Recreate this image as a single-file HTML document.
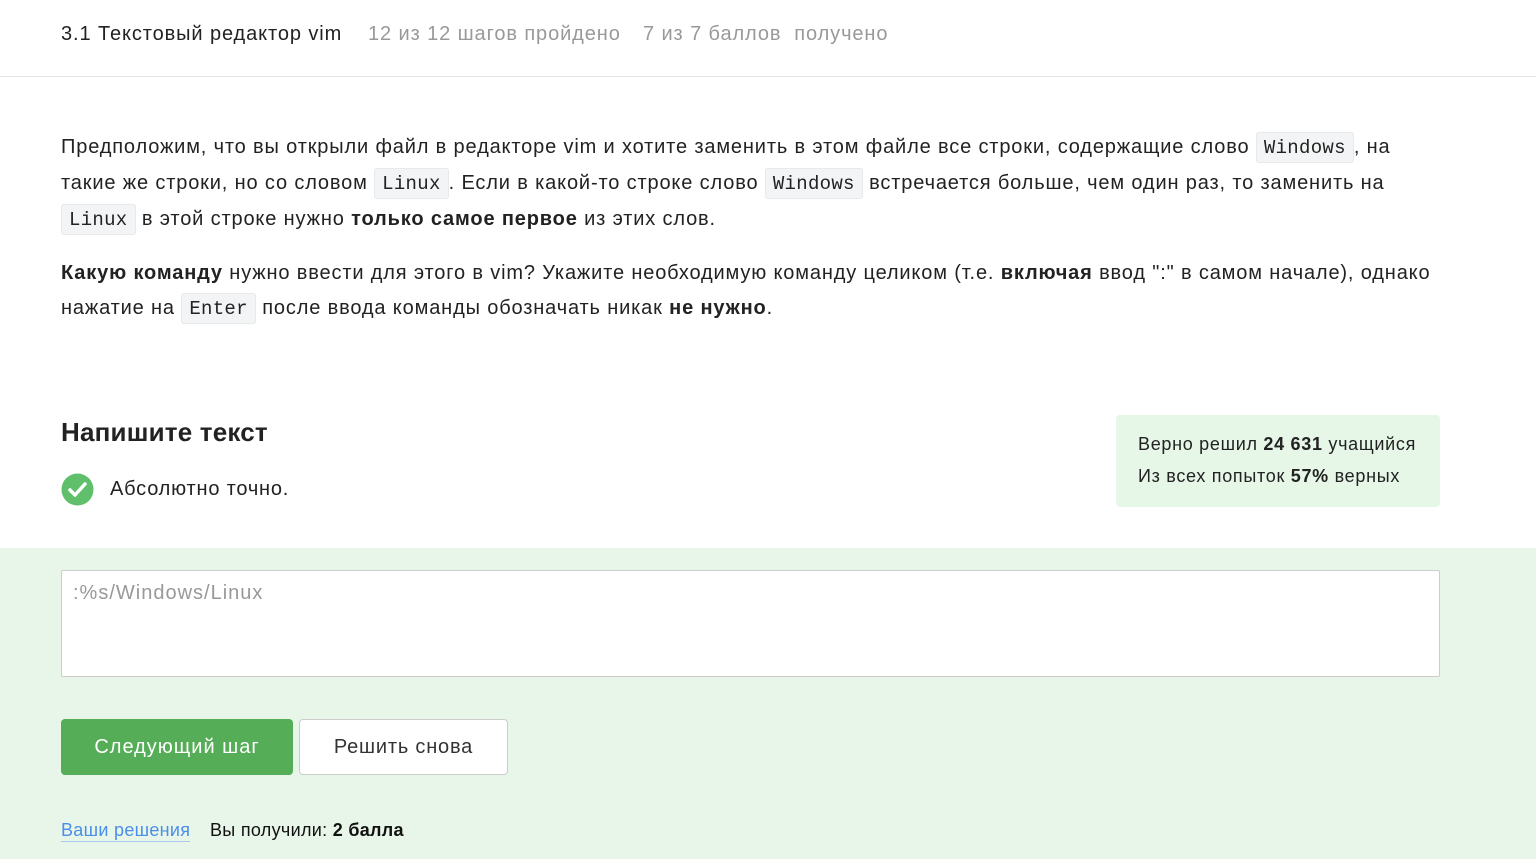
<!DOCTYPE html>
<html><head><meta charset="utf-8"><style>
*{box-sizing:border-box;margin:0;padding:0}
body{width:1536px;height:859px;overflow:hidden;background:#fff;font-family:"Liberation Sans","Noto Sans CJK SC",sans-serif;color:#222;position:relative}
.hdr{position:absolute;left:0;top:0;width:1536px;height:77px;border-bottom:1px solid #e3e3e3}
.hdr span{position:absolute;top:23px;font-size:20px;white-space:nowrap;letter-spacing:0.9px}
.p{position:absolute;left:61px;width:1460px;font-size:20px;line-height:35px;color:#222;letter-spacing:0.85px;white-space:nowrap}
code{font-family:"Liberation Mono",monospace;font-size:19px;background:#f3f4f5;border:1px solid #e8e9ea;border-radius:3px;padding:4px 7px 3px;letter-spacing:0.3px}
b{font-weight:bold}
.green{position:absolute;left:0;top:548px;width:1536px;height:311px;background:#e8f6e9}
.stats{position:absolute;left:1116px;top:415px;width:324px;height:92px;background:#e6f6e7;border-radius:4px;padding:13px 22px;font-size:18px;line-height:32px;letter-spacing:0.7px;white-space:nowrap}
.ta{position:absolute;left:61px;top:570px;width:1379px;height:107px;background:#fff;border:1px solid #ccc;border-radius:2px;padding:11px 11px;font-size:20px;color:#999;letter-spacing:1px}
.b1{position:absolute;left:61px;top:719px;width:232px;height:56px;background:#55ad57;border-radius:4px;color:#fff;font-size:20px;text-align:center;line-height:56px;letter-spacing:1px}
.b2{position:absolute;left:299px;top:719px;width:209px;height:56px;background:#fff;border:1px solid #ccc;border-radius:4px;color:#333;font-size:20px;text-align:center;line-height:54px;letter-spacing:0.8px}
</style></head><body>
<div class="hdr">
<span style="left:61px;color:#222">3.1 Текстовый редактор vim</span>
<span style="left:368px;color:#999">12 из 12 шагов пройдено</span>
<span style="left:643px;color:#999">7 из 7 баллов&nbsp; получено</span>
</div>
<div class="p" style="top:130px">Предположим, что вы открыли файл в редакторе vim и хотите заменить в этом файле все строки, содержащие слово <code>Windows</code>, на<br>такие же строки, но со словом <code>Linux</code>. Если в какой-то строке слово <code>Windows</code> встречается больше, чем один раз, то заменить на<br><code>Linux</code> в этой строке нужно <b>только самое первое</b> из этих слов.</div>
<div class="p" style="top:256px"><b>Какую команду</b> нужно ввести для этого в vim? Укажите необходимую команду целиком (т.е. <b>включая</b> ввод ":" в самом начале), однако<br>нажатие на <code>Enter</code> после ввода команды обозначать никак <b>не нужно</b>.</div>
<div style="position:absolute;left:61px;top:417px;font-size:26px;font-weight:bold;color:#222;letter-spacing:0.2px">Напишите текст</div>
<svg style="position:absolute;left:61px;top:473px" width="33" height="33" viewBox="0 0 33 33"><circle cx="16.5" cy="16.5" r="16" fill="#5fbf6a"/><path d="M9 17l5 5 10-11" stroke="#fff" stroke-width="3.5" fill="none" stroke-linecap="round" stroke-linejoin="round"/></svg>
<div style="position:absolute;left:110px;top:478px;font-size:20px;color:#222;letter-spacing:0.8px">Абсолютно точно.</div>
<div class="stats">Верно решил <b>24 631</b> учащийся<br>Из всех попыток <b>57%</b> верных</div>
<div class="green"></div>
<div class="ta">:%s/Windows/Linux</div>
<div class="b1">Следующий шаг</div>
<div class="b2">Решить снова</div>
<div style="position:absolute;left:61px;top:820px;font-size:18px;color:#4a8ee8;border-bottom:1px solid #a9c8f2;line-height:21px;letter-spacing:0.3px">Ваши решения</div>
<div style="position:absolute;left:210px;top:820px;font-size:18px;color:#111;line-height:21px;letter-spacing:0.3px">Вы получили: <b>2 балла</b></div>
</body></html>
